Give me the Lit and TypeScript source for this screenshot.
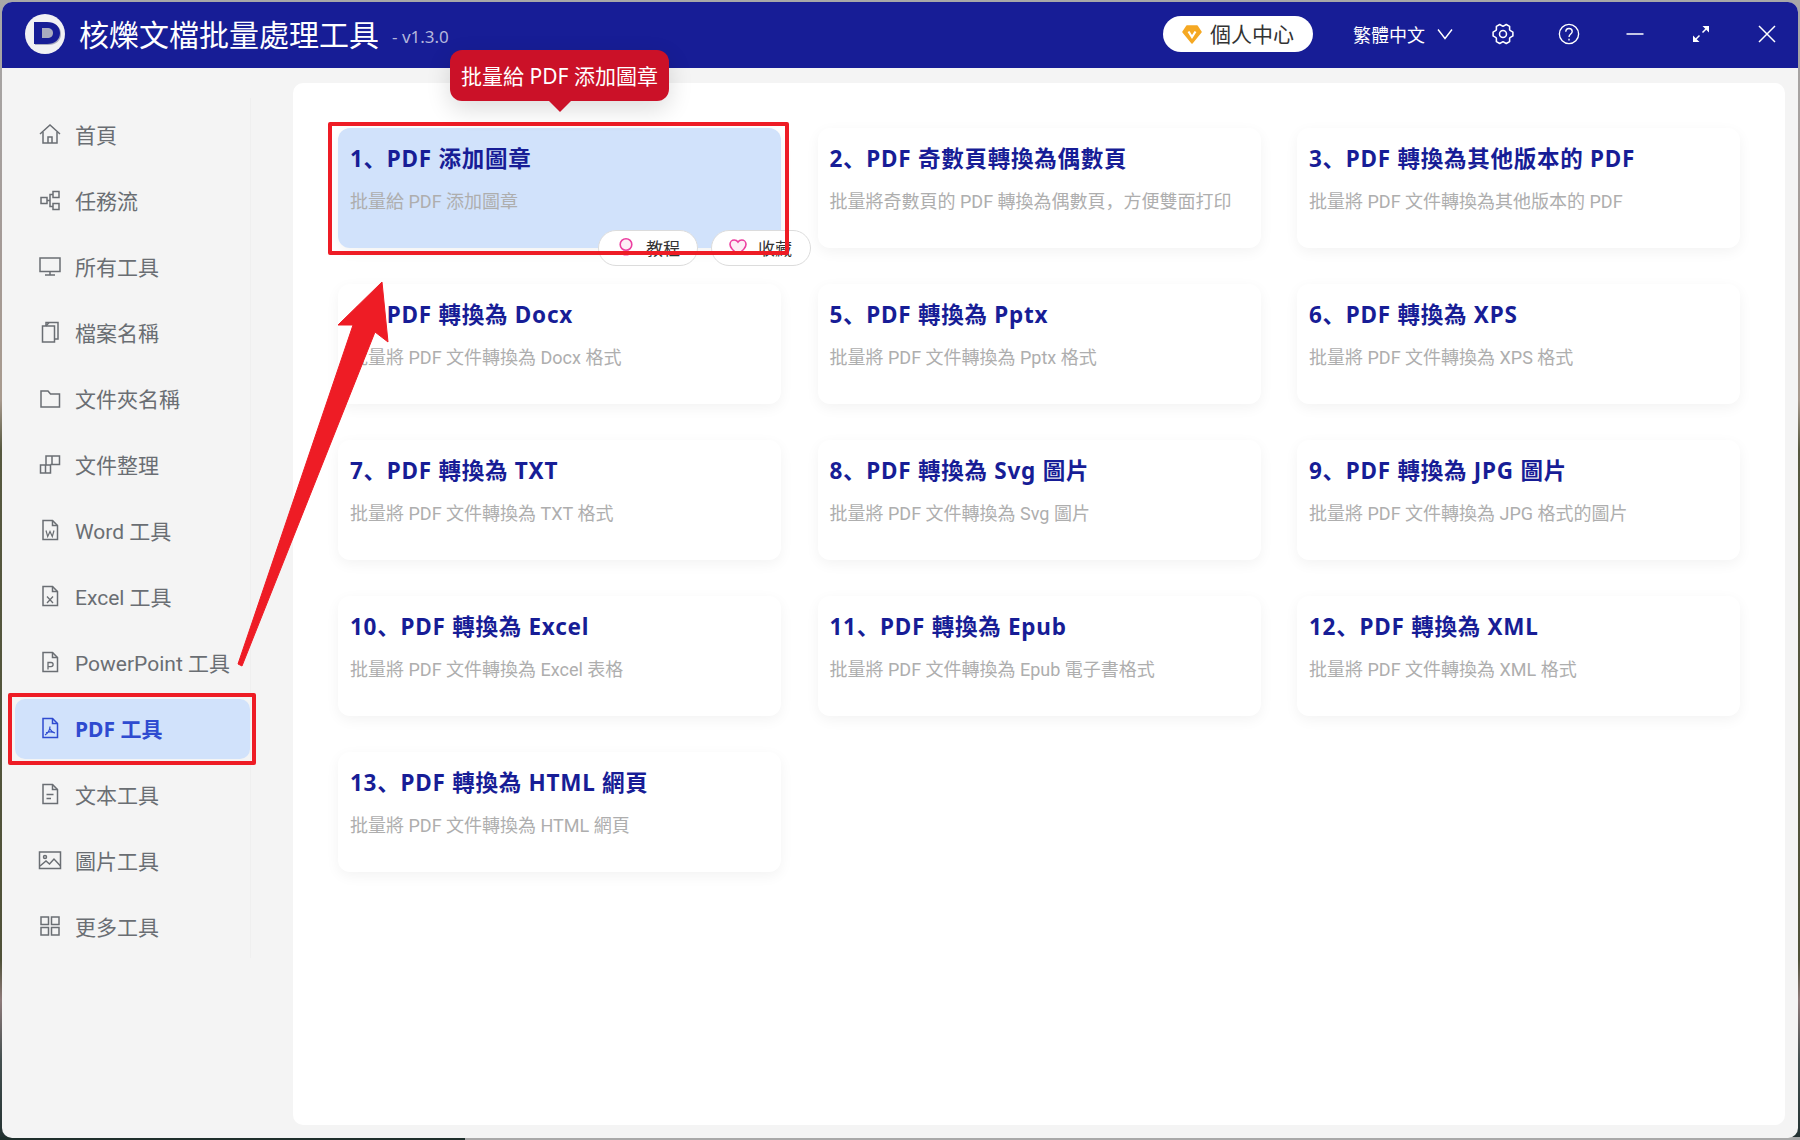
import { LitElement, html, css, svg } from "lit";
import { customElement } from "lit/decorators.js";

const FONT = css`"Noto Sans", "Noto Sans CJK SC", sans-serif`;
const FONT_LIGHT = css`Roboto, "Noto Sans CJK SC", sans-serif`;

const doc = (inner: unknown) => svg`<path d="M5 2.500h9.500L19.500 7.500V21.500H5Z"/><path d="M14.500 2.500V7.500H19.500"/>${inner}`;

const gearPath = (() => {
  const pts: string[] = [];
  for (let i = 0; i < 6; i++) {
    const a = i * 60;
    const ring: [number, number][] = [[a - 27, 8.6], [a - 11, 11], [a + 11, 11], [a + 27, 8.6]];
    for (const [deg, r] of ring) {
      const rad = (deg * Math.PI) / 180;
      pts.push(`${(12 + r * Math.cos(rad)).toFixed(2)} ${(12 + r * Math.sin(rad)).toFixed(2)}`);
    }
  }
  return "M" + pts.join("L") + "Z";
})();

const ICONS: Record<string, unknown> = {
  home: svg`<path d="M2 12 12 3l10 9"/><path d="M5 10v11h14V10"/><path d="M10 21v-6h4v6"/>`,
  flow: svg`<rect x="3" y="9.500" width="6" height="6"/><rect x="15" y="3.500" width="6" height="6"/><rect x="15" y="15.500" width="6" height="6"/><path d="M9 12.500h3V6.500h3M12 12.500v6h3"/>`,
  screen: svg`<rect x="2" y="4" width="20" height="13.500"/><path d="M12 17.500V21M7 21h10"/>`,
  files: svg`<path d="M4.500 6h12v16h-12Z"/><path d="M8 6V2.500h12V19h-3.500"/><path d="M8 6l3-3.500"/>`,
  folder: svg`<path d="M3 5h7l2.500 3H21.500v13H3Z"/>`,
  org: svg`<path d="M2.500 13h10v8h-10ZM7.500 13v8"/><path d="M8 13V4h13.500v8.500H12.500M14 4v8.500"/>`,
  word: doc(svg`<path d="M8 12.500l1.700 6 2.300-5 2.300 5 1.700-6" stroke-width="1.200"/>`),
  excel: doc(svg`<path d="M9 12.500l6 6.500M15 12.500l-6 6.500" stroke-width="1.300"/>`),
  ppt: doc(svg`<path d="M10 19.500V12.500h3a2 2 0 0 1 0 4.200h-3" stroke-width="1.300"/>`),
  pdf: doc(svg`<path d="M12 10.500c0 3-2 7-5 8.500M12 13c1 2 3 3.500 5 4M8 16.500c3-1 6-1 9 .5" stroke-width="1.200"/>`),
  text: doc(svg`<path d="M8.500 12.500h7M8.500 16.500h4.500"/>`),
  image: svg`<rect x="1.500" y="4" width="21" height="16.500"/><circle cx="7" cy="9" r="1.500"/><path d="M2 18l6-5 3.500 3 4.500-5 6.500 7"/>`,
  grid: svg`<rect x="3" y="3" width="7.500" height="7.500"/><rect x="13.500" y="3" width="7.500" height="7.500"/><rect x="3" y="13.500" width="7.500" height="7.500"/><rect x="13.500" y="13.500" width="7.500" height="7.500"/>`,
};

const NAV: [string, string][] = [
  ["home", "首頁"], ["flow", "任務流"], ["screen", "所有工具"], ["files", "檔案名稱"],
  ["folder", "文件夾名稱"], ["org", "文件整理"], ["word", "Word 工具"], ["excel", "Excel 工具"],
  ["ppt", "PowerPoint 工具"], ["pdf", "PDF 工具"], ["text", "文本工具"], ["image", "圖片工具"], ["grid", "更多工具"],
];

const CARDS: [string, string][] = [
  ["1、PDF 添加圖章", "批量給 PDF 添加圖章"],
  ["2、PDF 奇數頁轉換為偶數頁", "批量將奇數頁的 PDF 轉換為偶數頁，方便雙面打印"],
  ["3、PDF 轉換為其他版本的 PDF", "批量將 PDF 文件轉換為其他版本的 PDF"],
  ["4、PDF 轉換為 Docx", "批量將 PDF 文件轉換為 Docx 格式"],
  ["5、PDF 轉換為 Pptx", "批量將 PDF 文件轉換為 Pptx 格式"],
  ["6、PDF 轉換為 XPS", "批量將 PDF 文件轉換為 XPS 格式"],
  ["7、PDF 轉換為 TXT", "批量將 PDF 文件轉換為 TXT 格式"],
  ["8、PDF 轉換為 Svg 圖片", "批量將 PDF 文件轉換為 Svg 圖片"],
  ["9、PDF 轉換為 JPG 圖片", "批量將 PDF 文件轉換為 JPG 格式的圖片"],
  ["10、PDF 轉換為 Excel", "批量將 PDF 文件轉換為 Excel 表格"],
  ["11、PDF 轉換為 Epub", "批量將 PDF 文件轉換為 Epub 電子書格式"],
  ["12、PDF 轉換為 XML", "批量將 PDF 文件轉換為 XML 格式"],
  ["13、PDF 轉換為 HTML 網頁", "批量將 PDF 文件轉換為 HTML 網頁"],
];

@customElement("app-root")
export class AppRoot extends LitElement {
  static styles = css`
    :host {
      display: block;
      position: relative;
      width: 1800px;
      height: 1140px;
      overflow: hidden;
      font-family: ${FONT};
      background:
        linear-gradient(90deg, #1f2f2c 0 465px, #a9a9a9 465px) bottom / 100% 3px no-repeat,
        linear-gradient(180deg, #a8a8a8 0, #a49a96 250px, #a89a8e 400px, #56583f 450px, #4f5138 960px, #8e7a7a 1000px, #445050 1060px, #223030 1140px);
    }
    .window {
      position: absolute;
      inset: 2px;
      display: flex;
      flex-direction: column;
      background: #f4f4f4;
      border-radius: 10px;
      overflow: hidden;
    }
    .titlebar {
      height: 66px;
      flex: none;
      background: #171d96;
      display: flex;
      align-items: center;
      color: #fff;
      padding-left: 23px;
    }
    .logo { width: 40px; height: 40px; flex: none; margin-top: -2px; }
    .appname { font-size: 30px; margin-left: 14px; line-height: 40px; white-space: nowrap; }
    .version { font-size: 17px; color: #b4b7dc; margin-left: 13px; margin-top: 2px; white-space: nowrap; }
    .spacer { flex: 1; }
    .pill {
      width: 150px;
      height: 36px;
      border-radius: 18px;
      background: #fff;
      color: #333;
      display: flex;
      align-items: center;
      gap: 8px;
      padding-left: 19px;
      box-sizing: border-box;
      font-size: 21px;
      margin-bottom: 2px;
      white-space: nowrap;
    }
    .pill span { margin-top: -3px; }
    .lang {
      display: flex;
      align-items: center;
      font-size: 18px;
      margin-left: 40px;
      padding-bottom: 2px;
      white-space: nowrap;
    }
    .lang svg { margin-left: 12px; }
    .ctl {
      width: 66px;
      height: 40px;
      display: flex;
      align-items: center;
      justify-content: center;
      flex: none;
      margin-top: -2px;
    }
    .ctl svg { fill: none; stroke: #fff; stroke-width: 1.500; }
    .ctls { display: flex; margin-left: 17px; margin-right: -2px; }
    .body { flex: 1; display: flex; min-height: 0; position: relative; }
    .side {
      width: 249px;
      flex: none;
      margin-top: 30px;
      height: 860px;
      box-sizing: border-box;
      padding: 7px 0 0 13px;
      border-right: 1px solid #efefef;
      display: flex;
      flex-direction: column;
      gap: 6px;
    }
    .item {
      position: relative;
      height: 60px;
      flex: none;
      box-sizing: border-box;
      display: flex;
      align-items: center;
      border-radius: 10px;
      padding: 0 0 2px 23px;
      color: #6a6e73;
      font-family: ${FONT_LIGHT};
      font-size: 21px;
      white-space: nowrap;
    }
    .item svg {
      width: 24px;
      height: 24px;
      flex: none;
      fill: none;
      stroke: #6a6e73;
      stroke-width: 1.500;
      margin-right: 13px;
    }
    .item.on { background: #d1e2fb; color: #2f4bd0; font-weight: 700; font-family: ${FONT}; }
    .item.on svg { stroke: #2f4bd0; }
    .mark { position: absolute; border: 4px solid #ee1c25; border-radius: 2px; pointer-events: none; z-index: 5; }
    .mark.nav { left: -7px; top: -6px; width: 240px; height: 64px; }
    .panel {
      flex: 1;
      margin: 15px 13px 13px 42px;
      background: #fff;
      border-radius: 10px;
      padding: 45px 45px 0 45px;
      box-sizing: border-box;
    }
    .grid {
      display: grid;
      grid-template-columns: repeat(3, 443px);
      grid-auto-rows: 120px;
      gap: 36px 36.5px;
    }
    .card {
      position: relative;
      background: #fff;
      border-radius: 12px;
      box-shadow: 0 4px 14px rgba(0, 0, 0, 0.05);
      padding: 15px 12px;
      box-sizing: border-box;
    }
    .card.on { background: #d1e2fb; }
    .t {
      font-size: 22.5px;
      font-weight: 700;
      line-height: 32px;
      color: #171d96;
      letter-spacing: 0.75px;
      white-space: nowrap;
    }
    .s {
      font-family: ${FONT_LIGHT};
      font-size: 18px;
      line-height: 26px;
      color: #aeaeae;
      margin-top: 14px;
      white-space: nowrap;
    }
    .tip {
      position: absolute;
      left: 112px;
      top: -78px;
      width: 219px;
      height: 51px;
      box-sizing: border-box;
      padding-bottom: 2px;
      background: #cb1128;
      border-radius: 12px;
      color: #fff;
      font-size: 21px;
      display: flex;
      align-items: center;
      justify-content: center;
      white-space: nowrap;
      box-shadow: 0 8px 24px rgba(0, 0, 0, 0.14);
      z-index: 6;
    }
    .tip::after {
      content: "";
      position: absolute;
      left: 50%;
      bottom: -11px;
      margin-left: -12px;
      border: 12px solid transparent;
      border-bottom: 0;
      border-top-color: #cb1128;
    }
    .btns {
      position: absolute;
      right: -30px;
      bottom: -18px;
      display: flex;
      gap: 13px;
      z-index: 2;
    }
    .btn {
      width: 100px;
      height: 36px;
      box-sizing: border-box;
      border: 1px solid #dcdcdc;
      border-radius: 18px;
      background: #fff;
      display: flex;
      align-items: center;
      padding: 0 0 2px 20px;
      gap: 13px;
      font-size: 17px;
      color: #333;
      white-space: nowrap;
    }
    .btn.fav { padding-left: 17px; gap: 11px; }
    .mark.card-mark { left: -10px; top: -6px; width: 453px; height: 125px; }
    .arrow { position: absolute; left: 0; top: 0; width: 1800px; height: 1140px; pointer-events: none; z-index: 7; }
  `;

  render() {
    return html`
      <div class="window">
        <div class="titlebar">
          <svg class="logo" viewBox="0 0 40 40">
            <circle cx="20" cy="20" r="20" fill="#f1f1f4"/>
            <path d="M10 9h13c8 0 13 4.500 13 11s-5 11-13 11H10Z" fill="#a9abbf"/>
            <path fill-rule="evenodd" d="M9 8h13c8 0 13 4.500 13 11s-5 11-13 11H9ZM17 14v10h5c4 0 6-2 6-5s-2-5-6-5Z" fill="#171d96"/>
          </svg>
          <span class="appname">核爍文檔批量處理工具</span>
          <span class="version">- v1.3.0</span>
          <span class="spacer"></span>
          <div class="pill">
            <svg width="20" height="20" viewBox="0 0 20 20"><path d="M5 2h10l4 6-9 11L1 8Z" fill="#f5a823" stroke="#f5a823" stroke-width="1.500" stroke-linejoin="round"/><path d="M6.500 7.500 10 13l3.500-5.500" fill="none" stroke="#fff" stroke-width="2.200"/></svg>
            <span>個人中心</span>
          </div>
          <div class="lang">
            <span>繁體中文</span>
            <svg width="16" height="12" viewBox="0 0 16 12" fill="none" stroke="#fff" stroke-width="1.400"><path d="M1 1.500 8 10.500 15 1.500"/></svg>
          </div>
          <div class="ctls">
            <div class="ctl"><svg width="22" height="22" viewBox="0 0 24 24"><path d="${gearPath}" stroke-linejoin="round" stroke-width="1.700"/><circle cx="12" cy="12" r="3.800" stroke-width="1.700"/></svg></div>
            <div class="ctl"><svg width="22" height="22" viewBox="0 0 24 24"><circle cx="12" cy="12" r="10.500"/><path d="M8.500 9.500c0-2.200 1.600-3.500 3.500-3.500s3.500 1.300 3.500 3.200c0 2.800-3.500 2.800-3.500 6"/><path d="M12 17.300v1.700"/></svg></div>
            <div class="ctl"><svg width="18" height="18" viewBox="0 0 18 18"><path d="M0.500 9h17" stroke-width="1.700"/></svg></div>
            <div class="ctl"><svg width="18" height="18" viewBox="0 0 18 18"><path d="M4 14 7.500 10.500M10.500 7.500 14 4" stroke-width="1.500"/><path d="M1 17V10.500L7.500 17ZM17 1V7.500L10.500 1Z" fill="#fff" stroke="none"/></svg></div>
            <div class="ctl"><svg width="18" height="18" viewBox="0 0 18 18"><path d="M1 1l16 16M17 1 1 17"/></svg></div>
          </div>
        </div>
        <div class="body">
          <nav class="side">
            ${NAV.map(([ic, label]) => html`
              <div class="item ${label === "PDF 工具" ? "on" : ""}">
                <svg viewBox="0 0 24 24">${ICONS[ic]}</svg>
                <span>${label}</span>
                ${label === "PDF 工具" ? html`<div class="mark nav"></div>` : ""}
              </div>`)}
          </nav>
          <main class="panel">
            <div class="grid">
              ${CARDS.map(([t, s], i) => html`
                <div class="card ${i === 0 ? "on" : ""}">
                  <div class="t">${t}</div>
                  <div class="s">${s}</div>
                  ${i === 0 ? html`
                    <div class="tip">批量給 PDF 添加圖章</div>
                    <div class="btns">
                      <div class="btn">
                        <svg width="14" height="20" viewBox="0 0 14 20"><circle cx="7" cy="7.500" r="5.800" fill="#fdeef6" stroke="#ec3fa0" stroke-width="1.600"/><path d="M4.500 15h5v3.500h-5Z" fill="#ec3fa0"/></svg>
                        <span>教程</span>
                      </div>
                      <div class="btn fav">
                        <svg width="18" height="16" viewBox="0 0 18 16"><path d="M9 15C3 11 1 8 1 5.200 1 2.800 3 1 5.200 1 6.800 1 8.200 1.800 9 3c.8-1.200 2.200-2 3.800-2C15 1 17 2.800 17 5.200 17 8 15 11 9 15Z" fill="#fdeef6" stroke="#ec3fa0" stroke-width="1.600"/></svg>
                        <span>收藏</span>
                      </div>
                    </div>
                    <div class="mark card-mark"></div>
                  ` : ""}
                </div>`)}
            </div>
          </main>
        </div>
      </div>
      <svg class="arrow" viewBox="0 0 1800 1140">
        <path d="M382 282 388 342 375 332 242 666 238 664 353 325 338 325Z" fill="#ee1c25" stroke="#ee1c25" stroke-width="1" stroke-linejoin="round"/>
      </svg>
    `;
  }
}
